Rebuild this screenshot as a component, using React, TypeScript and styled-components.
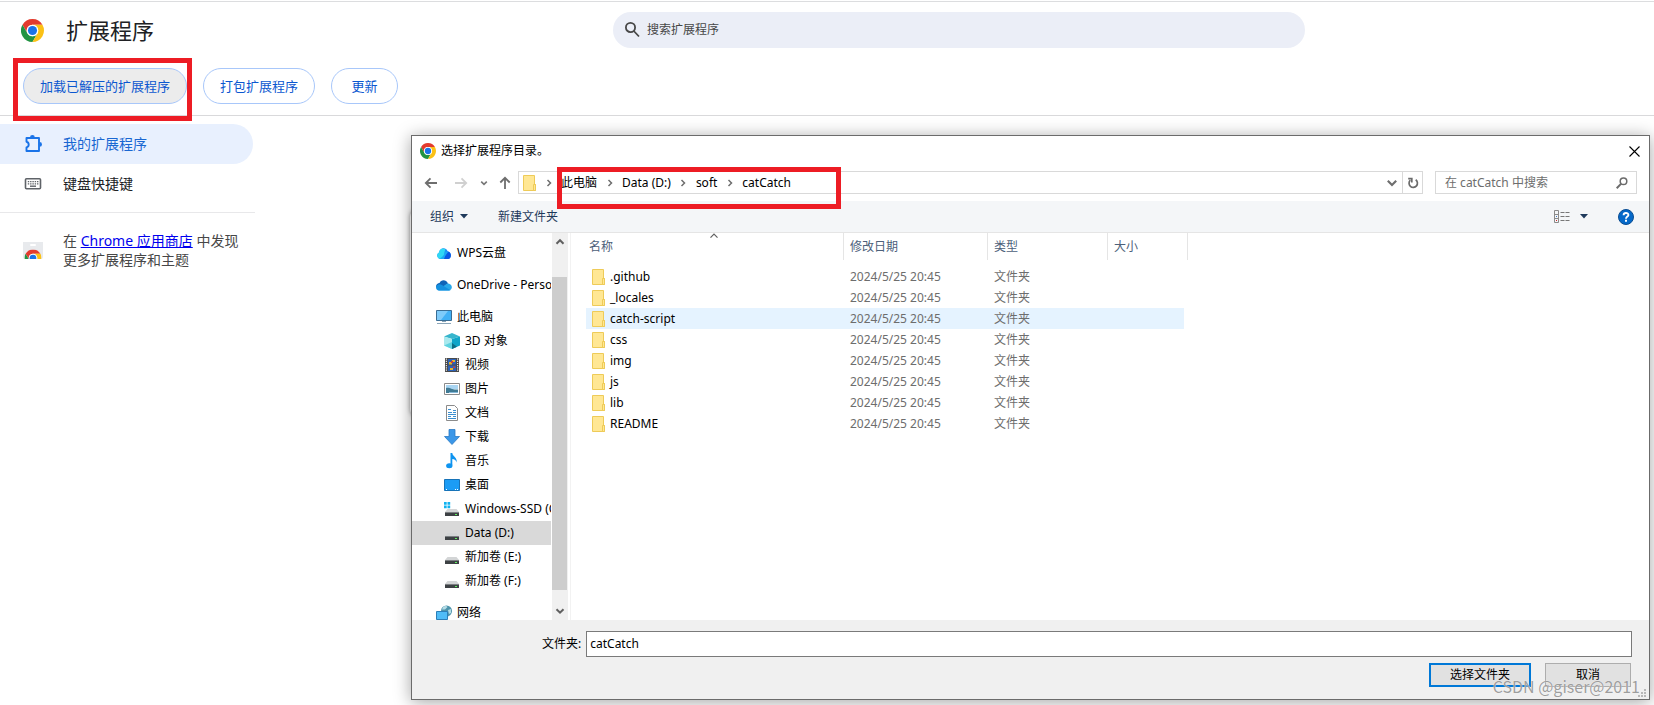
import React from "react";
import styled, { createGlobalStyle } from "styled-components";

const GlobalStyle = createGlobalStyle`
  *, *::before, *::after { box-sizing: border-box; }
  body {
    margin: 0;
    background: #fff;
    color: #000;
    font-family: "Noto Sans", "Noto Sans CJK SC", sans-serif;
    font-size: 12px;
    line-height: 20px;
  }
  button, input { font: inherit; color: inherit; margin: 0; }
  svg { display: block; flex: none; }
`;

/* ---------- extensions page ---------- */

const Page = styled.div`
  position: relative;
  min-height: 100vh;
  padding-top: 1px;
  overflow: hidden;
`;

const TopBar = styled.header`
  display: grid;
  grid-template-columns: 264px 1fr;
  align-items: center;
  height: 59px;
  padding-bottom: 2px;
  border-top: 1px solid #dcdddf;
`;

const Brand = styled.div`
  display: flex;
  align-items: center;
  gap: 22px;
  padding-left: 21px;
`;

const BrandTitle = styled.h1`
  margin: 0;
  font-size: 22px;
  line-height: 32px;
  font-weight: 400;
  color: #202124;
`;

const SearchField = styled.label`
  display: flex;
  align-items: center;
  justify-self: center;
  gap: 6px;
  width: 100%;
  max-width: 692px;
  height: 36px;
  padding: 0 10px;
  border-radius: 18px;
  background: #ebeef7;
  color: #474747;
`;

const BareInput = styled.input`
  flex: 1;
  min-width: 0;
  padding: 0;
  border: 0;
  outline: 0;
  background: transparent;
  &::placeholder { color: inherit; opacity: 1; }
`;

const ActionBar = styled.div`
  display: flex;
  gap: 16px;
  padding: 8px 23px 11px;
  border-bottom: 1px solid #d9d9db;
`;

const PillButton = styled.button<{ $active?: boolean }>`
  height: 36px;
  padding: 0 16px;
  min-width: 67px;
  border: 1px solid #a8c7fa;
  border-radius: 18px;
  background: ${(p) => (p.$active ? "#ececec" : "#fff")};
  color: #0b57d0;
  font-size: 13px;
`;

const SideMenu = styled.nav`
  width: 255px;
  padding-top: 8px;
`;

const SideLink = styled.a<{ $active?: boolean }>`
  display: flex;
  align-items: center;
  gap: 20px;
  height: 40px;
  margin-right: 2px;
  padding-left: 23px;
  border-radius: 0 20px 20px 0;
  background: ${(p) => (p.$active ? "#e8f0fe" : "transparent")};
  color: ${(p) => (p.$active ? "#1967d2" : "#202124")};
  font-size: 14px;
  text-decoration: none;
`;

const StoreNote = styled.div`
  display: flex;
  align-items: center;
  gap: 20px;
  margin-top: 8px;
  padding: 18px 0 0 23px;
  border-top: 1px solid #e8e8ea;
  color: #474747;
  font-size: 14px;
  line-height: 19px;
  p { margin: 0; white-space: nowrap; }
  a { color: #0000ee; }
`;

const RedFrame = styled.div<{ $box: [number, number, number, number] }>`
  position: absolute;
  left: ${(p) => p.$box[0]}px;
  top: ${(p) => p.$box[1]}px;
  width: ${(p) => p.$box[2]}px;
  height: ${(p) => p.$box[3]}px;
  border: 5px solid #ed1c24;
  pointer-events: none;
`;

/* ---------- folder picker ---------- */

const BackCard = styled.div`
  position: absolute;
  left: 410px;
  top: 209px;
  width: 200px;
  height: 208px;
  border-radius: 8px;
  background: #fff;
  box-shadow: 0 0 4px rgba(0, 0, 0, 0.4);
`;

const Dialog = styled.section`
  position: absolute;
  left: 411px;
  right: 4px;
  top: 135px;
  bottom: 5px;
  display: flex;
  flex-direction: column;
  border: 1px solid #6b6b6b;
  background: #fff;
  box-shadow: 0 2px 16px rgba(0, 0, 0, 0.36);
`;

const TitleBar = styled.div`
  display: flex;
  align-items: center;
  gap: 5px;
  height: 30px;
  padding: 0 9px 0 8px;
  h2 { flex: 1; margin: 0; font-size: 12px; font-weight: 400; }
`;

const IconButton = styled.button`
  display: flex;
  align-items: center;
  justify-content: center;
  padding: 0;
  border: 0;
  background: transparent;
`;

const NavRow = styled.div`
  display: flex;
  align-items: flex-start;
  height: 35px;
  padding: 5px 12px 0;
`;

const NavArrows = styled.div`
  display: grid;
  grid-template-columns: 30px 26px 18px 20px;
  justify-items: start;
  align-items: center;
  height: 23px;
`;

const AddressBar = styled.div`
  display: flex;
  align-items: center;
  flex: 1;
  height: 23px;
  margin-right: 12px;
  padding-left: 4px;
  border: 1px solid #d9d9d9;
`;

const Crumbs = styled.div`
  display: flex;
  align-items: center;
  flex: 1;
`;

const Crumb = styled.button`
  padding: 0;
  border: 0;
  background: transparent;
`;

const CrumbArrow = styled.span`
  display: flex;
  justify-content: center;
  width: 25px;
`;

const ExpandButton = styled(IconButton)`
  width: 20px;
  height: 21px;
`;

const RefreshButton = styled(ExpandButton)`
  border-left: 1px solid #d9d9d9;
`;

const FolderSearch = styled.label`
  display: flex;
  align-items: center;
  width: 202px;
  height: 23px;
  padding: 0 8px 0 9px;
  border: 1px solid #d9d9d9;
  color: #6d6d6d;
`;

const CommandBar = styled.div`
  display: flex;
  align-items: center;
  height: 32px;
  padding: 0 15px 0 18px;
  border-bottom: 1px solid #e5e5e5;
  background: #f4f6f8;
  color: #1e395b;
`;

const Command = styled.button`
  display: flex;
  align-items: center;
  gap: 6px;
  margin-right: 30px;
  padding: 0;
  border: 0;
  background: transparent;
`;

const CommandEnd = styled(Command)`
  gap: 10px;
  margin-left: auto;
`;

const Browser = styled.div`
  display: flex;
  flex: 1;
  min-height: 0;
`;

const Tree = styled.ul`
  width: 139px;
  margin: 0;
  padding: 8px 0 0;
  overflow: hidden;
  list-style: none;
`;

const TreeItem = styled.li<{ $nested?: boolean; $gap?: boolean; $selected?: boolean }>`
  display: flex;
  align-items: center;
  gap: 5px;
  height: 24px;
  margin-top: ${(p) => (p.$gap ? 8 : 0)}px;
  padding-left: ${(p) => (p.$nested ? 32 : 24)}px;
  background: ${(p) => (p.$selected ? "#d9d9d9" : "transparent")};
  white-space: nowrap;
`;

const ScrollBar = styled.div`
  display: flex;
  flex-direction: column;
  width: 16px;
  margin-left: 1px;
  background: #f0f0f0;
`;

const ScrollButton = styled(IconButton)`
  height: 18px;
`;

const ScrollTrack = styled.div`
  flex: 1;
  padding: 26px 1px 12px 0;
`;

const ScrollThumb = styled.div`
  height: 100%;
  background: #cdcdcd;
`;

const FileArea = styled.div`
  flex: 1;
  margin-left: 2px;
  padding-left: 15px;
  border-left: 1px solid #f2f2f2;
`;

const FileTable = styled.table`
  width: 602px;
  border-collapse: collapse;
  table-layout: fixed;
  th, td { padding: 0; font-weight: 400; text-align: left; }
  th { height: 33px; vertical-align: top; color: #4c607a; }
  td { height: 21px; padding-left: 6px; color: #6d6d6d; }
`;

const HeadCell = styled.div<{ $first?: boolean }>`
  position: relative;
  height: 27px;
  padding-left: ${(p) => (p.$first ? 3 : 6)}px;
  border-right: 1px solid #e5e5e5;
  line-height: 27px;
`;

const SortMark = styled.span`
  position: absolute;
  left: 123px;
  top: -2px;
`;

const FileRow = styled.tr<{ $hover?: boolean }>`
  background: ${(p) => (p.$hover ? "linear-gradient(#e5f3ff, #e5f3ff) 0 0 / 598px 100% no-repeat" : "none")};
`;

const FileName = styled.div`
  display: flex;
  align-items: center;
  gap: 5px;
  color: #000;
`;

const Footer = styled.form`
  display: flex;
  flex-direction: column;
  gap: 6px;
  padding: 11px 17px 12px 130px;
  background: #f0f0f0;
`;

const NameRow = styled.div`
  display: flex;
  align-items: center;
  gap: 5px;
`;

const NameInput = styled.input`
  flex: 1;
  height: 26px;
  padding: 0 3px 2px;
  border: 1px solid #7a7a7a;
  outline: 0;
  background: #fff;
`;

const FooterButtons = styled.div`
  display: flex;
  justify-content: flex-end;
  gap: 14px;
  padding-right: 1px;
`;

const FooterButton = styled.button<{ $primary?: boolean }>`
  width: ${(p) => (p.$primary ? 102 : 86)}px;
  height: 24px;
  padding: 0;
  border: ${(p) => (p.$primary ? "2px solid #0078d7" : "1px solid #adadad")};
  background: #e1e1e1;
`;

const Grip = styled.span`
  position: absolute;
  right: 3px;
  bottom: 2px;
`;

const Watermark = styled.span`
  position: absolute;
  right: 14px;
  bottom: 8px;
  color: rgba(140, 140, 140, 0.85);
  text-shadow: 0 0 1px #fff;
  font-family: "Noto Sans CJK SC", sans-serif;
  font-size: 16px;
  line-height: 22px;
  pointer-events: none;
`;

/* ---------- drawings ---------- */

const ChromeShapes = () => (
  <>
    <path fill="#e33b2e" d="M24 12h20.78A24 24 0 0 0 3.21 12L13.6 30A12 12 0 0 1 24 12z" />
    <path fill="#229342" d="M34.39 30 24 48A24 24 0 0 1 3.21 12L13.6 30a12 12 0 0 0 20.79 0z" />
    <path fill="#fbc116" d="M24 12h20.78A24 24 0 0 1 24 48l10.39-18A12 12 0 0 0 24 12z" />
    <circle cx="24" cy="24" r="12" fill="#fff" />
    <circle cx="24" cy="24" r="9.5" fill="#1a73e8" />
  </>
);

const ChromeLogo = ({ size }: { size: number }) => (
  <svg width={size} height={size} viewBox="0 0 48 48">
    <ChromeShapes />
  </svg>
);

const StoreIcon = () => (
  <svg width="20" height="17" viewBox="0 0 20 17">
    <path fill="#e8eaed" d="M0 0h20v15a2 2 0 0 1-2 2H2a2 2 0 0 1-2-2z" />
    <rect x="7" y="2" width="6" height="2" rx="1" fill="#fff" />
    <svg x="1.5" y="7.5" width="17" height="9.5" viewBox="0 0 48 27" preserveAspectRatio="xMidYMin slice">
      <ChromeShapes />
    </svg>
  </svg>
);

const SearchIcon = () => (
  <svg width="18" height="18" viewBox="0 0 18 18" fill="none" stroke="#474747" strokeWidth="1.8">
    <circle cx="7.5" cy="6.5" r="4.6" />
    <path d="m10.8 10 5.200 5.500" />
  </svg>
);

const PuzzleIcon = () => (
  <svg width="20" height="20" viewBox="0 0 20 20" fill="#1a73e8">
    <path fill="none" stroke="#1a73e8" strokeWidth="1.900" strokeLinejoin="round" d="M3.500 4h12.500v13h-12.500v-3.600c1.500-.3 2.200-1.400 2.200-2.800S5 8 3.500 7.700z" />
    <path d="M7 3.400a2.400 2.400 0 0 1 4.800 0zM16.600 8a2.400 2.400 0 0 1 0 4.800z" />
  </svg>
);

const KeyboardIcon = () => (
  <svg width="20" height="20" viewBox="0 0 20 20" fill="none" stroke="#5f6368">
    <rect x="2.500" y="4.700" width="15" height="10" rx="1" strokeWidth="1.600" />
    <path strokeWidth="1.300" strokeDasharray="1.400 0.900" d="M4.800 7.700h10.800M4.800 9.800h10.800" />
    <path strokeWidth="1.400" d="M7 12.200h6" />
  </svg>
);

type ChevronDir = "right" | "down" | "up";
const chevronPaths: Record<ChevronDir, string> = {
  right: "M3.500 2 6.500 5l-3 3",
  down: "M1.500 3.200 5 6.700l3.500-3.500",
  up: "M1.500 6.700 5 3.200l3.500 3.500",
};
const Chevron = ({ dir, size = 10, color = "#606060", weight = 1.5 }: { dir: ChevronDir; size?: number; color?: string; weight?: number }) => (
  <svg width={size} height={size} viewBox="0 0 10 10" fill="none" stroke={color} strokeWidth={weight}>
    <path d={chevronPaths[dir]} />
  </svg>
);

const Arrow = ({ turn, color }: { turn: number; color: string }) => (
  <svg width="14" height="14" viewBox="0 0 14 14" fill="none" stroke={color} strokeWidth="1.800">
    <path transform={`rotate(${turn} 7 7)`} d="M13 7H1.800M6.500 2.300 1.800 7l4.700 4.700" />
  </svg>
);

const Caret = () => (
  <svg width="8" height="5" viewBox="0 0 8 5">
    <path fill="#1e395b" d="M0 0h8L4 4.500z" />
  </svg>
);

const FolderIcon = () => (
  <svg width="13" height="16" viewBox="0 0 13 16">
    <path fill="#ffe794" stroke="#eecb58" d="M.5.5h11v9h1v6H.5z" />
    <path fill="#ffe794" stroke="#eecb58" d="M10.500 9.500h2v6h-2z" />
  </svg>
);

const RefreshIcon = () => (
  <svg width="12" height="12" viewBox="0 0 12 12" fill="none" stroke="#6b6b6b" strokeWidth="1.700">
    <path d="M8.700 2.800A4.200 4.200 0 1 1 3.300 3.200" />
    <path d="M1.200 1.600h3.600v3.800" />
  </svg>
);

const LensIcon = () => (
  <svg width="12" height="12" viewBox="0 0 12 12" fill="none" stroke="#6b6b6b" strokeWidth="1.500">
    <circle cx="7.500" cy="4.300" r="3.300" />
    <path strokeWidth="2" d="M5 6.900.7 11.200" />
  </svg>
);

const CloseIcon = () => (
  <svg width="11" height="11" viewBox="0 0 11 11" stroke="#000" strokeWidth="1.100">
    <path d="m.5.5 10 10M10.500.5l-10 10" />
  </svg>
);

const ViewIcon = () => (
  <svg width="16" height="13" viewBox="0 0 16 13" fill="none">
    <path stroke="#8a8a8a" d="M.5.5h4v12h-4zM.5 4.500h4M.5 8.500h4" />
    <path stroke="#777" strokeDasharray="4 1" d="M6.500 2.500H16M6.500 6.500H16M6.500 10.500H16" />
    <path fill="#3b78c4" d="M2 6h1v1H2z" />
    <path fill="#c22" d="M2 10h1v1H2z" />
  </svg>
);

const HelpIcon = () => (
  <svg width="16" height="16" viewBox="0 0 16 16">
    <circle cx="8" cy="8" r="7.500" fill="#0569c9" stroke="#0a4d92" />
    <path fill="none" stroke="#fff" strokeWidth="1.900" d="M5.600 6.200C5.600 3.200 10.400 3.300 10.400 5.900 10.400 7.600 8 7.500 8 9.700" />
    <path fill="#fff" d="M7 10.800h2v1.900H7z" />
  </svg>
);

const GripDots = () => (
  <svg width="8" height="8" viewBox="0 0 8 8" fill="#b8b8b8">
    <path d="M6 0h2v2H6zM3 3h2v2H3zM6 3h2v2H6zM0 6h2v2H0zM3 6h2v2H3zM6 6h2v2H6z" />
  </svg>
);

type TreeKind = "wps" | "onedrive" | "pc" | "cube" | "video" | "picture" | "doc" | "download" | "music" | "desktop" | "winDisk" | "disk" | "network";

const diskShape = (
  <g transform="translate(0 1)">
    <path fill="#d3d5d6" d="M3.500 7h9l2.500 3H1z" />
    <path fill="#3d4144" d="M1 10h14v4H1z" />
    <path fill="#7b7f82" d="M1 10h14v1H1z" />
    <path fill="#5ef05e" d="M11 12h2v1h-2z" />
  </g>
);

const treeShapes: Record<TreeKind, React.ReactNode> = {
  wps: (
    <>
      <path fill="#1f8df5" d="M4 14a3.500 3.500 0 0 1-1-6.500C3.500 2.500 10 1.500 11.500 6 16 7 16 13.500 12 14z" />
      <path fill="#2fd8f4" d="M4 14a3.500 3.500 0 0 1-1-6.500C3.500 4 7 2.500 9.500 4.500 8 7 8 12 9 14z" />
      <path fill="#1ba8f5" d="M3 14C6 13 8 10 9.500 6.500L12 7 9 14z" />
      <path fill="#0b57e3" d="M8 14c1-3 2.500-5.500 4.500-7.300C16 8 15.500 13.700 12 14z" />
    </>
  ),
  onedrive: (
    <>
      <path fill="#0f64b8" d="M0 10C0 7 2 6 3.500 6 5 2.500 10 2 12 6.500L6 11z" />
      <path fill="#28a8ea" d="M2 13.500 9 8c2-2 4-2 5-.8 2.700 1.300 2.500 5.800-1 6.300H3z" />
      <path fill="#1490df" d="M0 10c1-3 4-3.500 6-2l8.500 5.200-1.500.3H3C1 13.500 0 12 0 10z" />
    </>
  ),
  pc: (
    <>
      <path fill="#42b0f5" stroke="#3a6d94" d="M.5 1.500h15v10H.5z" />
      <path fill="#7fcbfa" d="M1 2h11L5 11H1z" />
      <path fill="#8aa5b8" d="M6 12h4v1H6zM1 14h14v1H1z" />
    </>
  ),
  cube: (
    <>
      <path fill="#37b5cc" d="M8 0 16 3.500 8 6 0 3.500z" />
      <path fill="#a9e9ee" d="M0 3.500 8 6v10L0 12.500z" />
      <path fill="#10a5c8" d="M16 3.500 8 6v10l8-3.500z" />
      <path fill="#5fd3e0" d="M0 12.500 8 9v7z" />
      <path fill="#0d6f86" d="m8 10 5 3.700L8 16z" />
    </>
  ),
  video: (
    <>
      <path fill="#4a4a4a" d="M1 1h14v14H1z" />
      <path stroke="#e6e6e6" strokeWidth="1.200" strokeDasharray="1.200 1" d="M2.400 1.500v13M13.600 1.500v13" />
      <path fill="#2c62b8" d="M4 2h8v5.500H4zM4 8.500h8V14H4z" />
      <path fill="#e5b52c" d="M5 5h3v2.500H5zM8 3h3v2H8zM6 11h3v2H6z" />
      <path fill="#cf4037" d="M7 4h2v2H7zM9 9.500h2V11H9z" />
    </>
  ),
  picture: (
    <>
      <path fill="#fff" stroke="#8b8b8b" d="M.5 2.500h15v11H.5z" />
      <path fill="#a9d5f2" d="M2 4h12v4H2z" />
      <path fill="#3f7a94" d="M2 7c4-1 5 2 12 1.500V12H2z" />
      <path fill="#85b8d8" d="M5 11h9v1H5z" />
    </>
  ),
  doc: (
    <>
      <path fill="#fff" stroke="#8b8b8b" d="M2.500.5h8l3 3v12h-11z" />
      <path stroke="#3b8fd0" d="M4 4.500h3M9 5.500h3M4 7.500h4M9 7.500h3M4 9.500h8M4 11.500h3M9 11.500h3M4 13.500h8" />
    </>
  ),
  download: <path fill="#3b97e8" stroke="#2a78c4" strokeWidth=".8" d="M5 .5h6v7h4.500L8 15.500.5 7.500H5z" />,
  music: (
    <>
      <path fill="#0e94f0" d="M6.500 0h1.800c.2 3.500 5 4 4.500 9.500-.7-2.200-2.300-3.300-4.500-3.500V12H6.500z" />
      <ellipse cx="5.300" cy="12.800" rx="3.200" ry="2.500" fill="#0e94f0" />
    </>
  ),
  desktop: (
    <>
      <path fill="#1b9cf5" stroke="#1773b8" d="M.5 2.500h15v11H.5z" />
      <path fill="#fff" d="M2 12h1v1H2zM11 12h1v1h-1zM13 12h1v1h-1z" />
    </>
  ),
  winDisk: (
    <>
      {diskShape}
      <path fill="#10b2f0" d="M0 1h2.700v2.700H0zM3.500 1h2.700v2.700H3.500zM0 4.500h2.700v2.700H0zM3.500 4.500h2.700v2.700H3.500z" />
    </>
  ),
  disk: diskShape,
  network: (
    <>
      <circle cx="10.500" cy="6" r="5.500" fill="#4d93ab" />
      <path fill="#b4dce6" d="M7 2c2-1.700 4-1 4.500 0L9 4.500H6zM12 5l3-1v4l-2 1z" />
      <path fill="#4fbcf7" stroke="#2c7eb8" d="M.5 6.500h11v8H.5z" />
    </>
  ),
};

const TreeIcon = ({ kind }: { kind: TreeKind }) => (
  <svg width="16" height="16" viewBox="0 0 16 16" fill="none">
    {treeShapes[kind]}
  </svg>
);

/* ---------- data ---------- */

const treeItems: { label: string; kind: TreeKind; nested?: boolean; gap?: boolean; selected?: boolean }[] = [
  { label: "WPS云盘", kind: "wps" },
  { label: "OneDrive - Personal", kind: "onedrive", gap: true },
  { label: "此电脑", kind: "pc", gap: true },
  { label: "3D 对象", kind: "cube", nested: true },
  { label: "视频", kind: "video", nested: true },
  { label: "图片", kind: "picture", nested: true },
  { label: "文档", kind: "doc", nested: true },
  { label: "下载", kind: "download", nested: true },
  { label: "音乐", kind: "music", nested: true },
  { label: "桌面", kind: "desktop", nested: true },
  { label: "Windows-SSD (C:)", kind: "winDisk", nested: true },
  { label: "Data (D:)", kind: "disk", nested: true, selected: true },
  { label: "新加卷 (E:)", kind: "disk", nested: true },
  { label: "新加卷 (F:)", kind: "disk", nested: true },
  { label: "网络", kind: "network", gap: true },
];

const crumbs = ["此电脑", "Data (D:)", "soft", "catCatch"];
const folders = [".github", "_locales", "catch-script", "css", "img", "js", "lib", "README"];

const FolderPicker = () => (
  <Dialog role="dialog" aria-label="选择扩展程序目录">
    <TitleBar>
      <ChromeLogo size={16} />
      <h2>选择扩展程序目录。</h2>
      <IconButton type="button" aria-label="关闭">
        <CloseIcon />
      </IconButton>
    </TitleBar>
    <NavRow>
      <NavArrows>
        <IconButton type="button" aria-label="后退"><Arrow turn={0} color="#6e6e6e" /></IconButton>
        <IconButton type="button" aria-label="前进"><Arrow turn={180} color="#d0d0d0" /></IconButton>
        <IconButton type="button" aria-label="最近位置"><Chevron dir="down" size={8} color="#777" weight={2} /></IconButton>
        <IconButton type="button" aria-label="上移"><Arrow turn={90} color="#6e6e6e" /></IconButton>
      </NavArrows>
      <AddressBar>
        <FolderIcon />
        <Crumbs>
          {crumbs.map((c) => (
            <React.Fragment key={c}>
              <CrumbArrow><Chevron dir="right" color="#6e6e6e" /></CrumbArrow>
              <Crumb type="button">{c}</Crumb>
            </React.Fragment>
          ))}
        </Crumbs>
        <ExpandButton type="button" aria-label="展开地址">
          <Chevron dir="down" size={12} color="#6e6e6e" weight={1.8} />
        </ExpandButton>
        <RefreshButton type="button" aria-label="刷新">
          <RefreshIcon />
        </RefreshButton>
      </AddressBar>
      <FolderSearch>
        <BareInput type="text" placeholder="在 catCatch 中搜索" aria-label="在 catCatch 中搜索" />
        <LensIcon />
      </FolderSearch>
    </NavRow>
    <CommandBar>
      <Command type="button">组织 <Caret /></Command>
      <Command type="button">新建文件夹</Command>
      <CommandEnd type="button" aria-label="更改视图">
        <ViewIcon />
        <Caret />
      </CommandEnd>
      <IconButton type="button" aria-label="帮助"><HelpIcon /></IconButton>
    </CommandBar>
    <Browser>
      <Tree>
        {treeItems.map((t) => (
          <TreeItem key={t.label} $nested={t.nested} $gap={t.gap} $selected={t.selected}>
            <TreeIcon kind={t.kind} />
            {t.label}
          </TreeItem>
        ))}
      </Tree>
      <ScrollBar>
        <ScrollButton type="button" aria-label="向上滚动"><Chevron dir="up" weight={2} /></ScrollButton>
        <ScrollTrack><ScrollThumb /></ScrollTrack>
        <ScrollButton type="button" aria-label="向下滚动"><Chevron dir="down" weight={2} /></ScrollButton>
      </ScrollBar>
      <FileArea>
        <FileTable>
          <colgroup>
            <col width="258" />
            <col width="144" />
            <col width="120" />
            <col width="80" />
          </colgroup>
          <thead>
            <tr>
              <th>
                <HeadCell $first>
                  名称
                  <SortMark><Chevron dir="up" size={10} weight={1.2} /></SortMark>
                </HeadCell>
              </th>
              <th><HeadCell>修改日期</HeadCell></th>
              <th><HeadCell>类型</HeadCell></th>
              <th><HeadCell>大小</HeadCell></th>
            </tr>
          </thead>
          <tbody>
            {folders.map((name) => (
              <FileRow key={name} $hover={name === "catch-script"}>
                <td><FileName><FolderIcon />{name}</FileName></td>
                <td>2024/5/25 20:45</td>
                <td>文件夹</td>
                <td />
              </FileRow>
            ))}
          </tbody>
        </FileTable>
      </FileArea>
    </Browser>
    <Footer onSubmit={(e) => e.preventDefault()}>
      <NameRow>
        <label htmlFor="folder-name">文件夹:</label>
        <NameInput id="folder-name" type="text" defaultValue="catCatch" />
      </NameRow>
      <FooterButtons>
        <FooterButton type="submit" $primary>选择文件夹</FooterButton>
        <FooterButton type="button">取消</FooterButton>
      </FooterButtons>
    </Footer>
    <Grip><GripDots /></Grip>
    <RedFrame $box={[145, 31, 284, 42]} />
  </Dialog>
);

export default function App() {
  return (
    <Page>
      <GlobalStyle />
      <TopBar>
        <Brand>
          <ChromeLogo size={23} />
          <BrandTitle>扩展程序</BrandTitle>
        </Brand>
        <SearchField>
          <SearchIcon />
          <BareInput type="search" placeholder="搜索扩展程序" aria-label="搜索扩展程序" />
        </SearchField>
      </TopBar>
      <ActionBar>
        <PillButton type="button" $active>加载已解压的扩展程序</PillButton>
        <PillButton type="button">打包扩展程序</PillButton>
        <PillButton type="button">更新</PillButton>
      </ActionBar>
      <SideMenu>
        <SideLink href="#extensions" $active>
          <PuzzleIcon />
          我的扩展程序
        </SideLink>
        <SideLink href="#shortcuts">
          <KeyboardIcon />
          键盘快捷键
        </SideLink>
        <StoreNote>
          <StoreIcon />
          <p>
            在 <a href="#store">Chrome 应用商店</a> 中发现
            <br />
            更多扩展程序和主题
          </p>
        </StoreNote>
      </SideMenu>
      <RedFrame $box={[13, 58, 179, 63]} />
      <BackCard />
      <FolderPicker />
      <Watermark>CSDN @giser@2011</Watermark>
    </Page>
  );
}
